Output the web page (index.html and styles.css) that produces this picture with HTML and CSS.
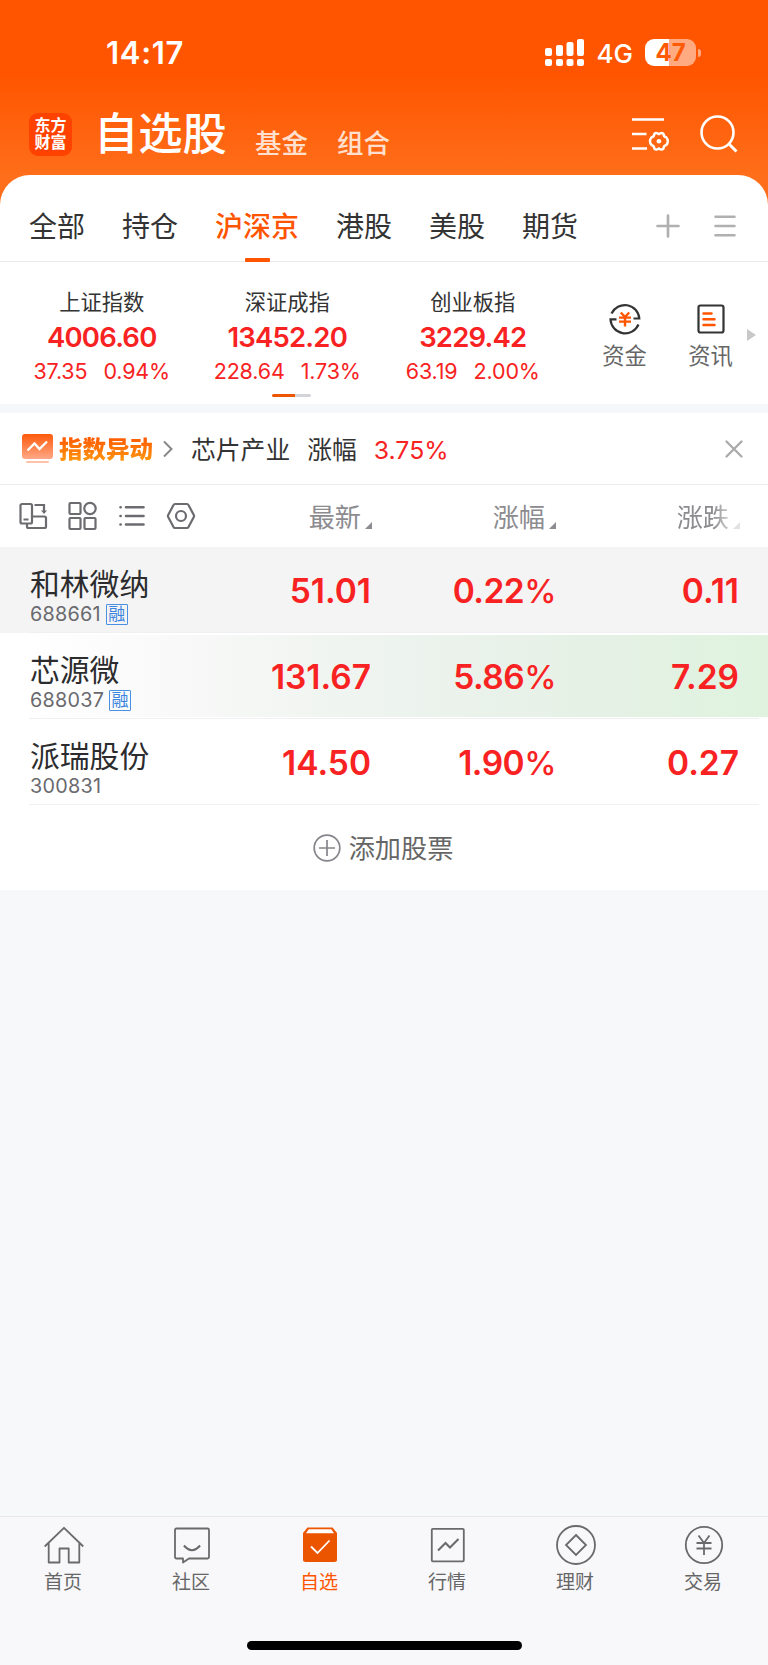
FILE: index.html
```html
<!DOCTYPE html>
<html lang="zh-CN">

<head>
    <meta charset="UTF-8">
    <title>自选股</title>
    <link rel="stylesheet" href="styles.css">
</head>

<body>
    <div class="header">
        <div class="status-bar">
            <span class="time">14:17</span>
            <div class="status-right">
                <svg class="signal" width="40" height="28" viewBox="0 0 40 28" fill="#fff">
                    <rect x="0" y="9" width="7" height="8" rx="2" />
                    <rect x="11" y="6" width="7" height="11" rx="2" />
                    <rect x="21.500" y="3" width="7" height="14" rx="2" />
                    <rect x="32" y="0" width="7" height="17" rx="2" />
                    <rect x="0" y="20" width="7" height="7" rx="2" />
                    <rect x="11" y="20" width="7" height="7" rx="2" />
                    <rect x="21.500" y="20" width="7" height="7" rx="2" />
                    <rect x="32" y="20" width="7" height="7" rx="2" />
                </svg>
                <span class="network">4G</span>
                <div class="battery">47</div>
                <div class="battery-cap"></div>
            </div>
        </div>
        <div class="title-bar">
            <div class="logo">东方<br>财富</div>
            <h1>自选股</h1>
            <span class="sub">基金</span>
            <span class="sub">组合</span>
            <div class="title-icons">
                <svg width="39" height="36" viewBox="0 0 39 36" fill="none" stroke="#fff" stroke-width="2.600">
                    <path d="M0 3.500H32M0 18H14.500M0 32.500H15" />
                    <path d="M26.900 18.200Q29.500 15.800 31.500 17.800Q31.500 20.800 34.200 21.300Q37.500 25.200 34.200 29.100Q31.500 29.600 31.500 32.600Q29.500 34.600 26.900 32.300Q24.300 34.600 22.300 32.600Q22.300 29.600 19.600 29.100Q16.300 25.200 19.600 21.300Q22.300 20.800 22.300 17.800Q24.300 15.800 26.900 18.200Z" stroke-width="2.400" stroke-linejoin="round" />
                    <circle cx="26.900" cy="25.200" r="2.300" fill="#fff" stroke="none" />
                </svg>
                <svg width="38" height="38" viewBox="0 0 38 38" fill="none" stroke="#fff" stroke-width="2.600">
                    <circle cx="17.500" cy="17.500" r="16" />
                    <path d="M28.500 28.500L36.500 36.500" stroke-width="3" />
                </svg>
            </div>
        </div>
    </div>

    <div class="card">
        <div class="tabs">
            <span class="tab">全部</span>
            <span class="tab">持仓</span>
            <span class="tab active">沪深京</span>
            <span class="tab">港股</span>
            <span class="tab">美股</span>
            <span class="tab">期货</span>
            <div class="tab-icons">
                <svg width="24" height="24" viewBox="0 0 24 24" stroke="#b0b0b0" stroke-width="2.700" stroke-linecap="round">
                    <path d="M1.500 12H22.500M12 1.500V22.500" />
                </svg>
                <svg width="22" height="24" viewBox="0 0 22 24" stroke="#b0b0b0" stroke-width="2.500" stroke-linecap="round">
                    <path d="M1.500 2.800H20.500M1.500 12H20.500M1.500 21.200H20.500" />
                </svg>
            </div>
        </div>

        <div class="indices">
            <div class="index">
                <div class="index-name">上证指数</div>
                <div class="index-value">4006.60</div>
                <div class="index-change"><span>37.35</span><span>0.94%</span></div>
            </div>
            <div class="index">
                <div class="index-name">深证成指</div>
                <div class="index-value">13452.20</div>
                <div class="index-change"><span>228.64</span><span>1.73%</span></div>
            </div>
            <div class="index">
                <div class="index-name">创业板指</div>
                <div class="index-value">3229.42</div>
                <div class="index-change"><span>63.19</span><span>2.00%</span></div>
            </div>
            <div class="shortcut">
                <svg width="32" height="32" viewBox="0 0 32 32" fill="none" stroke="#333" stroke-width="2.200">
                    <path d="M2.500 10.500A14.600 14.600 0 0 1 30.300 15.500H24.500" />
                    <path d="M29.500 21.500A14.600 14.600 0 0 1 1.500 16.300H7.500" />
                    <path d="M11.800 9.500L16 14L20.200 9.500M10 14.600H22M10 18.600H22M16 14V23.500" stroke="#ff5500" stroke-width="2.400" />
                </svg>
                <span>资金</span>
            </div>
            <div class="shortcut">
                <svg width="32" height="32" viewBox="0 0 32 32" fill="none" stroke="#333" stroke-width="2.200">
                    <rect x="3.500" y="2.500" width="25" height="27" rx="2" />
                    <path d="M8.500 10.500H16.500M8.500 16.300H19.500M8.500 22H19.500" stroke="#ff5500" stroke-width="2.500" stroke-linecap="round" />
                </svg>
                <span>资讯</span>
            </div>
            <div class="more-arrow"></div>
            <div class="pager"></div>
        </div>

        <div class="alert">
            <svg width="31" height="30" viewBox="0 0 31 30">
                <defs>
                    <linearGradient id="fade" x1="0" y1="0" x2="0" y2="1">
                        <stop offset="0" stop-color="#ff5a0a" />
                        <stop offset="1" stop-color="#ffa888" />
                    </linearGradient>
                </defs>
                <rect width="31" height="25" rx="3" fill="url(#fade)" />
                <path d="M5.500 16.500L12.500 9.500L17.500 15L25 7.500" fill="none" stroke="#fff" stroke-width="2.300" />
                <rect x="4" y="27" width="23" height="2" rx="1" fill="#ffc3aa" />
            </svg>
            <span class="alert-title">指数异动</span>
            <svg class="chevron" width="10" height="18" viewBox="0 0 10 18" fill="none" stroke="#888" stroke-width="2">
                <path d="M1 1.500L8.500 9L1 16.500" />
            </svg>
            <span class="alert-name">芯片产业</span>
            <span class="alert-label">涨幅</span>
            <span class="alert-value">3.75%</span>
            <svg class="close" width="18" height="18" viewBox="0 0 18 18" stroke="#aaa" stroke-width="2.300" stroke-linecap="round">
                <path d="M1.500 1.500L16.500 16.500M16.500 1.500L1.500 16.500" />
            </svg>
        </div>

        <div class="table-head">
            <div class="view-icons">
                <svg width="30" height="28" viewBox="0 0 30 28" fill="none" stroke="#6c6c70" stroke-width="2.200">
                    <rect x="2.500" y="2" width="11.500" height="19.500" rx="1.500" />
                    <path d="M5.500 17.500H10.500M16.500 3H26V10M14 14.500H26.500Q28 14.500 28 16V24.500Q28 26 26.500 26H10.500Q9 26 9 24.500V21.500" />
                    <path d="M23 8.500H29L26 12Z" fill="#6c6c70" stroke="none" />
                </svg>
                <svg width="30" height="28" viewBox="0 0 30 28" fill="none" stroke="#6c6c70" stroke-width="2.200">
                    <rect x="2.500" y="1" width="11" height="11" rx="1" />
                    <circle cx="23" cy="6.500" r="5.700" />
                    <rect x="2.500" y="16" width="11" height="11" rx="1" />
                    <rect x="17.500" y="16" width="11" height="11" rx="1" />
                </svg>
                <svg width="30" height="28" viewBox="0 0 30 28" fill="none" stroke="#6c6c70" stroke-width="2.600" stroke-linecap="round">
                    <path d="M3.500 5.300H3.700M3.500 14H3.700M3.500 22.500H3.700M9 5.300H26.500M9 14H26.500M9 22.500H26.500" />
                </svg>
                <svg width="30" height="28" viewBox="0 0 30 28" fill="none" stroke="#6c6c70" stroke-width="2.200">
                    <path d="M9 2H21Q22 2 22.500 3L27.800 13Q28.300 14 27.800 15L22.500 25Q22 26 21 26H9Q8 26 7.500 25L2.200 15Q1.700 14 2.200 13L7.500 3Q8 2 9 2Z" />
                    <circle cx="15" cy="14" r="5" />
                </svg>
            </div>
            <span class="col">最新<i></i></span>
            <span class="col">涨幅<i></i></span>
            <span class="col last">涨跌<i></i></span>
        </div>

        <div class="stock pinned">
            <div class="stock-info">
                <div class="stock-name">和林微纳</div>
                <div class="stock-code">688661<span class="badge">融</span></div>
            </div>
            <span class="num">51.01</span>
            <span class="num rate">0.22<b>%</b></span>
            <span class="num">0.11</span>
        </div>
        <div class="stock flash">
            <div class="stock-info">
                <div class="stock-name">芯源微</div>
                <div class="stock-code">688037<span class="badge">融</span></div>
            </div>
            <span class="num">131.67</span>
            <span class="num rate">5.86<b>%</b></span>
            <span class="num">7.29</span>
        </div>
        <div class="stock">
            <div class="stock-info">
                <div class="stock-name">派瑞股份</div>
                <div class="stock-code">300831</div>
            </div>
            <span class="num">14.50</span>
            <span class="num rate">1.90<b>%</b></span>
            <span class="num">0.27</span>
        </div>

        <div class="add-stock">
            <svg width="28" height="28" viewBox="0 0 28 28" fill="none" stroke="#85858c" stroke-width="1.700">
                <circle cx="14" cy="14" r="12.800" />
                <path d="M6 14H22M14 6V22" />
            </svg>
            <span>添加股票</span>
        </div>
    </div>

    <div class="footer">
        <div class="nav">
            <div class="nav-item">
                <svg width="40" height="40" viewBox="0 0 40 40" fill="none" stroke="#6a6a6a" stroke-width="1.800">
                    <path d="M.7 20.500L20 1.800L39.300 20.500M4.700 17V36.500H15.500V22.500H24.700V36.500H35.300V17" stroke-linejoin="round" />
                </svg>
                <span>首页</span>
            </div>
            <div class="nav-item">
                <svg width="40" height="40" viewBox="0 0 40 40" fill="none" stroke="#6a6a6a" stroke-width="1.800">
                    <path d="M4.500 2.500H35.500Q37 2.500 37 4V31Q37 32.500 35.500 32.500H17L11 36.500V32.500H4.500Q3 32.500 3 31V4Q3 2.500 4.500 2.500Z" stroke-linejoin="round" />
                    <path d="M12 19.500Q20 29 28 19.500" stroke-width="2.200" />
                </svg>
                <span>社区</span>
            </div>
            <div class="nav-item active">
                <svg width="40" height="40" viewBox="0 0 40 40">
                    <path d="M7.500 1.500H32.500L37 7V33.500Q37 36 34.500 36H5.500Q3 36 3 33.500V7Z" fill="#ec5500" />
                    <path d="M8.800 3.300H31.200L34 7.300H6Z" fill="#fff" />
                    <path d="M11 20.500L17.500 27L29.500 14.500" fill="none" stroke="#fff" stroke-width="1.800" />
                </svg>
                <span>自选</span>
            </div>
            <div class="nav-item">
                <svg width="40" height="40" viewBox="0 0 40 40" fill="none" stroke="#6a6a6a" stroke-width="1.800">
                    <rect x="3.800" y="2.800" width="32" height="32.500" rx="1" />
                    <path d="M10 24.500L17.500 17L22 21.500L30.500 13" stroke-width="2.100" />
                </svg>
                <span>行情</span>
            </div>
            <div class="nav-item">
                <svg width="40" height="40" viewBox="0 0 40 40" fill="none" stroke="#6a6a6a" stroke-width="1.800">
                    <circle cx="20" cy="19" r="19" />
                    <path d="M20 9L30 19L20 29L10 19Z" />
                </svg>
                <span>理财</span>
            </div>
            <div class="nav-item">
                <svg width="40" height="40" viewBox="0 0 40 40" fill="none" stroke="#6a6a6a" stroke-width="1.800">
                    <circle cx="20" cy="19" r="18.200" />
                    <path d="M14.500 9.500L20 17L25.500 9.500M12.500 17H27.500M12.500 22.500H27.500M20 17V29" />
                </svg>
                <span>交易</span>
            </div>
        </div>
        <div class="home-bar"></div>
    </div>
</body>

</html>
```
FILE: styles.css
```css
* {
    box-sizing: border-box;
}

body {
    margin: 0;
    height: 1665px;
    display: flex;
    flex-direction: column;
    background-color: #f7f8fa;
    color: #333;
    font-family: Inter, "Noto Sans CJK SC", sans-serif;
}

svg {
    display: block;
    flex-shrink: 0;
    overflow: visible;
}

span {
    white-space: nowrap;
}

.header {
    height: 215px;
    color: #fff;
    background: linear-gradient(#ff5500 0, #ff5500 75px, #ff6e1a 175px);
}

.status-bar {
    display: flex;
    justify-content: space-between;
    align-items: center;
    height: 80px;
    padding: 25px 67px 0 106px;
}

.time {
    font-size: 31px;
    font-weight: 600;
    line-height: 40px;
    letter-spacing: 0.7px;
}

.status-right {
    display: flex;
    align-items: center;
}

.network {
    margin: 2px 12px 0 12px;
    font-size: 26px;
    font-weight: 500;
    line-height: 28px;
}

.battery {
    width: 51px;
    height: 27px;
    border-radius: 9px;
    background: linear-gradient(90deg, #fff 24px, #ffaa80 24px);
    color: #ff5a05;
    font-size: 24px;
    font-weight: 700;
    line-height: 28px;
    text-align: center;
}

.battery-cap {
    width: 3px;
    height: 8px;
    margin-left: 2px;
    border-radius: 0 4px 4px 0;
    background-color: #ffaa80;
}

.title-bar {
    display: flex;
    align-items: center;
    height: 95px;
    padding: 13px 30px 0 29px;
}

.logo {
    width: 43px;
    height: 43px;
    padding-top: 4px;
    border-radius: 9px;
    background-color: #ff4200;
    font-family: "Liberation Serif", "Noto Sans CJK SC", serif;
    font-size: 16px;
    font-weight: 700;
    line-height: 17.5px;
    text-align: center;
}

.title-bar h1 {
    margin: 0 28px 0 22px;
    font-size: 44.3px;
    font-weight: 500;
    line-height: 50px;
}

.sub {
    margin: 17px 29px 0 0;
    color: #ffe0cf;
    font-size: 26.5px;
    font-weight: 500;
    line-height: 30px;
}

.title-icons {
    display: flex;
    align-items: center;
    gap: 29px;
    margin-left: auto;
}

.card {
    margin-top: -40px;
    border-radius: 30px 30px 0 0;
    background-color: #fff;
}

.tabs {
    display: flex;
    gap: 37px;
    height: 87px;
    padding: 0 32px 0 29px;
    border-bottom: 1px solid #ebebee;
}

.tab {
    position: relative;
    font-size: 28px;
    line-height: 104px;
}

.tab.active {
    color: #ff5500;
    font-weight: 500;
}

.tab.active::after {
    content: "";
    position: absolute;
    left: 30px;
    bottom: -1px;
    width: 25px;
    height: 4px;
    border-radius: 1px;
    background-color: #ff5500;
}

.tab-icons {
    display: flex;
    align-items: center;
    gap: 34px;
    height: 102px;
    margin-left: auto;
}

.indices {
    position: relative;
    display: flex;
    height: 142px;
    padding: 24px 0 0 9px;
}

.index {
    width: 185.5px;
    text-align: center;
}

.index-name {
    font-size: 21.3px;
    line-height: 33px;
}

.index-value {
    color: #f82222;
    font-size: 27.5px;
    font-weight: 600;
    line-height: 36px;
    letter-spacing: -0.8px;
}

.index-change {
    display: flex;
    justify-content: center;
    gap: 16px;
    color: #f82222;
    font-size: 21.5px;
    line-height: 33px;
    letter-spacing: -0.15px;
}

.shortcut {
    display: flex;
    flex-direction: column;
    align-items: center;
    width: 86px;
    padding-top: 17px;
    color: #666;
    font-size: 22.3px;
    line-height: 42px;
}

.shortcut:nth-child(4) {
    margin-left: 16px;
}

.more-arrow {
    margin: 43px 0 0 -7px;
    width: 0;
    height: 0;
    border: 6px solid transparent;
    border-left: 9px solid #c8c8c8;
    border-right: 0;
}

.pager {
    position: absolute;
    left: 272px;
    bottom: 7px;
    width: 39px;
    height: 3px;
    border-radius: 2px;
    background: linear-gradient(90deg, #ee5500 23px, #d3d4da 23px);
}

.alert {
    display: flex;
    align-items: center;
    height: 81px;
    padding: 0 25px 0 22px;
    border-top: 9px solid #f5f7fa;
    border-bottom: 1px solid #ebebee;
    font-size: 24.8px;
    line-height: 36px;
}

.alert-title,
.alert-name,
.alert-label,
.alert-value {
    padding-top: 2px;
}

.alert-title {
    margin: 0 10px 0 6px;
    font-size: 23.5px;
    font-weight: 900;
    background: linear-gradient(#ff5a00 20%, #ff9a10 85%);
    -webkit-background-clip: text;
    background-clip: text;
    color: transparent;
}

.alert-name {
    margin: 0 17px 0 18px;
}

.alert-label {
    margin-right: 17px;
}

.alert-value {
    color: #f82222;
}

.close {
    margin-left: auto;
}

.table-head {
    display: flex;
    align-items: center;
    height: 62px;
    padding-left: 18px;
    color: #8c8c90;
    font-size: 26.2px;
    line-height: 40px;
}

.view-icons {
    display: flex;
    gap: 19.3px;
    width: 178px;
}

.col {
    display: flex;
    justify-content: flex-end;
    align-items: center;
    width: 184px;
    padding-top: 3px;
}

.col:nth-child(2) {
    width: 176px;
}

.col i {
    margin: 15px 0 0 4px;
    border-left: 7px solid transparent;
    border-bottom: 7px solid #8c8c90;
}

.col.last {
    -webkit-mask-image: linear-gradient(90deg, #000 157px, rgba(0, 0, 0, 0.25) 178px);
    mask-image: linear-gradient(90deg, #000 157px, rgba(0, 0, 0, 0.25) 178px);
}

.stock {
    position: relative;
    display: flex;
    height: 86px;
    padding-left: 30px;
}

.stock::after {
    content: "";
    position: absolute;
    left: 29px;
    right: 9px;
    bottom: 0;
    height: 1px;
    background-color: #f0f0f2;
}

.stock.pinned {
    background-color: #f4f4f5;
}

.stock.flash {
    background: linear-gradient(90deg, #fff 30px, #f7f8f7 200px, #edf3ee 400px, #e5f1e5 600px, #dff3df 768px) 0 2px / 100% 82px no-repeat;
}

.stock-info {
    width: 157px;
}

.stock-name {
    padding-top: 17px;
    color: #2c2c2e;
    font-size: 29.8px;
    line-height: 41px;
}

.stock-code {
    display: flex;
    align-items: center;
    gap: 5px;
    height: 22px;
    margin-top: -2px;
    color: #6a6a6e;
    font-size: 19.8px;
    line-height: 22px;
    letter-spacing: 0.25px;
}

.badge {
    width: 22px;
    height: 21px;
    border: 1px solid #4a90e2;
    border-radius: 1px;
    color: #3a84e0;
    font-size: 17px;
    line-height: 19px;
    text-align: center;
}

.num {
    width: 184px;
    color: #f82222;
    font-size: 33.5px;
    font-weight: 600;
    line-height: 88px;
    text-align: right;
}

.num.rate {
    letter-spacing: -0.5px;
}

.num b {
    margin-right: -1px;
    font-size: 32.5px;
    font-weight: 500;
}

.add-stock {
    display: flex;
    justify-content: center;
    align-items: center;
    gap: 8px;
    height: 85px;
    padding-right: 2px;
    color: #666;
    font-size: 26.2px;
    line-height: 40px;
}

.add-stock span {
    padding-top: 2px;
}

.footer {
    height: 149px;
    margin-top: auto;
    border-top: 1px solid #e8e8eb;
    background-color: #f8f8fb;
}

.nav {
    display: flex;
    height: 124px;
    padding-top: 9px;
}

.nav-item {
    display: flex;
    flex-direction: column;
    align-items: center;
    width: 128px;
    color: #666;
    font-size: 19px;
    line-height: 34px;
}

.nav-item span {
    padding-right: 2px;
}

.nav-item.active {
    color: #ff5500;
}

.home-bar {
    width: 275px;
    height: 9px;
    margin: 0 auto;
    border-radius: 5px;
    background-color: #000;
}
```
